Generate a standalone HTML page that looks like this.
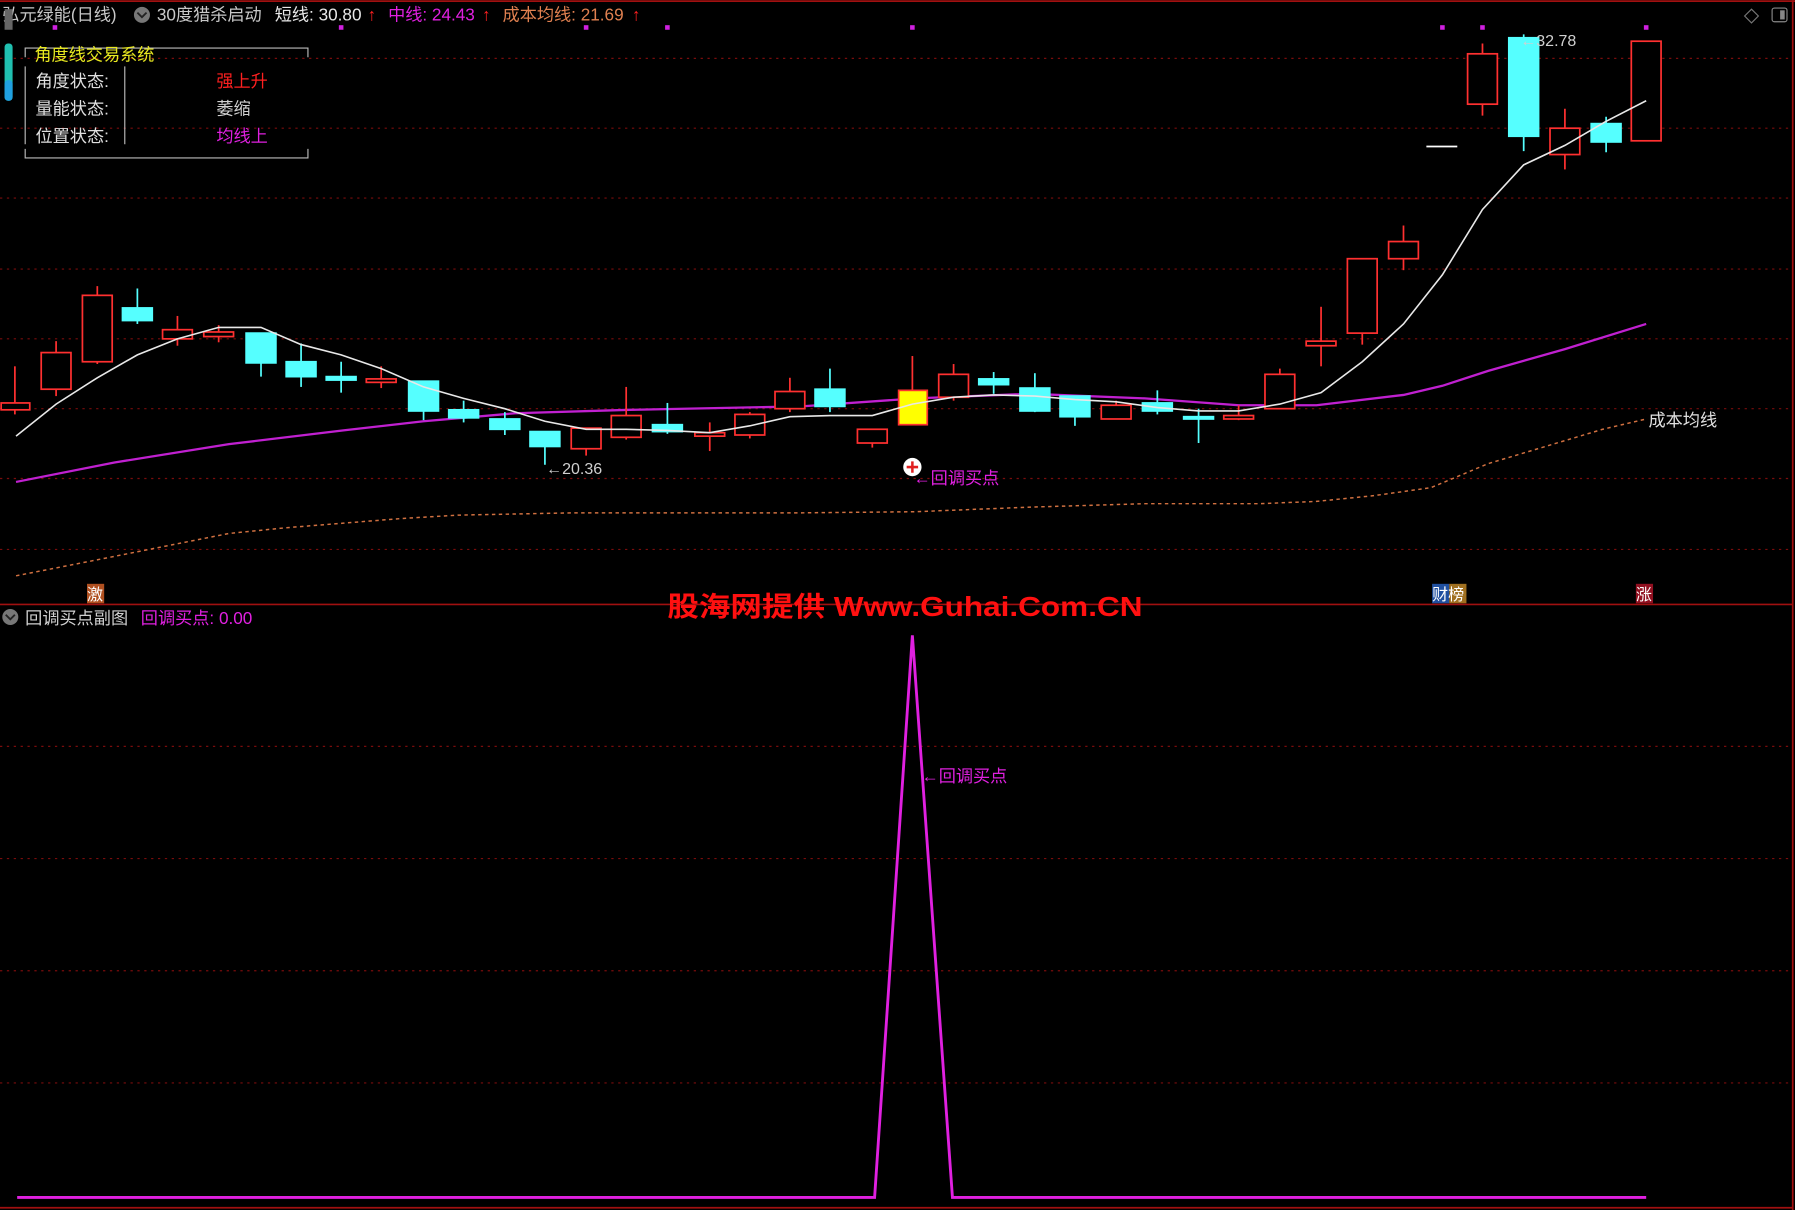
<!DOCTYPE html>
<html><head><meta charset="utf-8"><style>
html,body{margin:0;padding:0;background:#000;overflow:hidden}
svg{display:block}
text{font-family:"Liberation Sans","Noto Sans CJK SC",sans-serif}
</style></head><body>
<svg width="1795" height="1210" viewBox="0 0 1568 1057" preserveAspectRatio="none" xmlns="http://www.w3.org/2000/svg">
<rect width="1568" height="1057" fill="#000"/>
<g stroke="#7a0c0c" stroke-width="1" stroke-dasharray="2,4">
<line x1="0" y1="51" x2="1566" y2="51"/><line x1="0" y1="112" x2="1566" y2="112"/>
<line x1="0" y1="173" x2="1566" y2="173"/><line x1="0" y1="235" x2="1566" y2="235"/>
<line x1="0" y1="296" x2="1566" y2="296"/><line x1="0" y1="357" x2="1566" y2="357"/>
<line x1="0" y1="418" x2="1566" y2="418"/><line x1="0" y1="480" x2="1566" y2="480"/>
<line x1="0" y1="652" x2="1566" y2="652"/><line x1="0" y1="750" x2="1566" y2="750"/>
<line x1="0" y1="848" x2="1566" y2="848"/><line x1="0" y1="946" x2="1566" y2="946"/>
</g>
<g stroke="#a01010" stroke-width="1.5" fill="none">
<line x1="0" y1="1" x2="1568" y2="1"/><line x1="1566" y1="0" x2="1566" y2="1057"/>
<line x1="0" y1="528" x2="1566" y2="528"/><line x1="0" y1="1055" x2="1566" y2="1055"/>
</g>
<text x="2" y="18" font-size="15" fill="#c8c8c8">弘元绿能(日线)</text>
<circle cx="124" cy="13" r="7" fill="#777"/><path d="M120 11 L124 15 L128 11" stroke="#222" stroke-width="1.6" fill="none"/>
<text x="137" y="18" font-size="15" fill="#c8c8c8">30度猎杀启动</text>
<text x="240" y="18" font-size="15" fill="#e8e8e8">短线: 30.80</text>
<text x="321" y="18" font-size="15" fill="#ff2020">↑</text>
<text x="339" y="18" font-size="15" fill="#e020e0">中线: 24.43</text>
<text x="421" y="18" font-size="15" fill="#ff2020">↑</text>
<text x="439" y="18" font-size="15" fill="#e08050">成本均线: 21.69</text>
<text x="552" y="18" font-size="15" fill="#ff2020">↑</text>
<g fill="#d020e0">
<rect x="46" y="22" width="4" height="4"/><rect x="296" y="22" width="4" height="4"/><rect x="510" y="22" width="4" height="4"/>
<rect x="581" y="22" width="4" height="4"/><rect x="795" y="22" width="4" height="4"/><rect x="1258" y="22" width="4" height="4"/>
<rect x="1293" y="22" width="4" height="4"/><rect x="1436" y="22" width="4" height="4"/>
</g>
<path d="M1530 8 L1536 14 L1530 20 L1524 14 Z" stroke="#777" fill="none"/>
<rect x="1548" y="7" width="13" height="12" rx="2" stroke="#888" fill="none"/><rect x="1555" y="9" width="4" height="8" fill="#888"/>
<rect x="4" y="8" width="7" height="18" fill="#666"/>
<rect x="4" y="38" width="7" height="50" rx="3" fill="#20c0b0"/>
<rect x="4" y="70" width="7" height="18" rx="3" fill="#20a0e0"/>
<path d="M22 50 L22 42 L269 42 L269 50 M22 130 L22 138 L269 138 L269 130" stroke="#bbb" fill="none"/>
<line x1="22" y1="58" x2="22" y2="126" stroke="#bbb"/>
<line x1="109" y1="58" x2="109" y2="126" stroke="#bbb"/>
<text x="30" y="53" font-size="15" fill="#e8e820">角度线交易系统</text>
<text x="31" y="76" font-size="15" fill="#e0e0e0">角度状态:</text>
<text x="31" y="100" font-size="15" fill="#e0e0e0">量能状态:</text>
<text x="31" y="124" font-size="15" fill="#e0e0e0">位置状态:</text>
<text x="189" y="76" font-size="15" fill="#ff2020">强上升</text>
<text x="189" y="100" font-size="15" fill="#d0d0d0">萎缩</text>
<text x="189" y="124" font-size="15" fill="#e020e0">均线上</text>
<polyline fill="none" stroke="#d07040" stroke-width="1.3" stroke-dasharray="3,3" points="14,503 80,490 150,476 200,466 250,461 300,457 350,453 400,450 500,448 600,448 700,448 800,447 900,443 1000,440 1100,440 1150,438 1200,433 1250,426 1300,405 1350,390 1400,375 1438,366"/>
<polyline fill="none" stroke="#c020d0" stroke-width="2" points="14,421 100,404 200,388 300,376 370,368 450,361 550,358 700,355 800,348 900,344 1000,348 1082,354 1150,354 1226,345 1260,337 1300,324 1367,305 1438,283"/>
<g stroke-width="1.5">
<g stroke="#ff3030" fill="none">
<line x1="13" y1="320" x2="13" y2="362"/><rect x="1" y="352" width="25" height="6" fill="#000"/>
<line x1="49" y1="298" x2="49" y2="346"/><rect x="36" y="308" width="26" height="32" fill="#000"/>
<line x1="85" y1="250" x2="85" y2="318"/><rect x="72" y="258" width="26" height="58" fill="#000"/>
<line x1="155" y1="276" x2="155" y2="302"/><rect x="142" y="288" width="26" height="8" fill="#000"/>
<line x1="191" y1="284" x2="191" y2="299"/><rect x="178" y="290" width="26" height="4" fill="#000"/>
<line x1="333" y1="320" x2="333" y2="339"/><rect x="320" y="331" width="26" height="3" fill="#000"/>
<line x1="512" y1="374" x2="512" y2="398"/><rect x="499" y="374" width="26" height="18" fill="#000"/>
<line x1="547" y1="338" x2="547" y2="384"/><rect x="534" y="363" width="26" height="19" fill="#000"/>
<line x1="620" y1="369" x2="620" y2="394"/><rect x="607" y="378" width="26" height="3" fill="#000"/>
<line x1="655" y1="360" x2="655" y2="383"/><rect x="642" y="362" width="26" height="18" fill="#000"/>
<line x1="690" y1="330" x2="690" y2="360"/><rect x="677" y="342" width="26" height="15" fill="#000"/>
<line x1="762" y1="375" x2="762" y2="391"/><rect x="749" y="375" width="26" height="12" fill="#000"/>
<line x1="797" y1="311" x2="797" y2="341"/>
<line x1="833" y1="318" x2="833" y2="350"/><rect x="820" y="327" width="26" height="20" fill="#000"/>
<line x1="975" y1="350" x2="975" y2="366"/><rect x="962" y="354" width="26" height="12" fill="#000"/>
<line x1="1082" y1="354" x2="1082" y2="367"/><rect x="1069" y="363" width="26" height="3" fill="#000"/>
<line x1="1118" y1="322" x2="1118" y2="357"/><rect x="1105" y="327" width="26" height="30" fill="#000"/>
<line x1="1154" y1="268" x2="1154" y2="320"/><rect x="1141" y="298" width="26" height="4" fill="#000"/>
<line x1="1190" y1="226" x2="1190" y2="301"/><rect x="1177" y="226" width="26" height="65" fill="#000"/>
<line x1="1226" y1="197" x2="1226" y2="236"/><rect x="1213" y="211" width="26" height="15" fill="#000"/>
<line x1="1295" y1="38" x2="1295" y2="101"/><rect x="1282" y="47" width="26" height="44" fill="#000"/>
<line x1="1367" y1="95" x2="1367" y2="148"/><rect x="1354" y="112" width="26" height="23" fill="#000"/>
<rect x="1425" y="36" width="26" height="87" fill="#000"/>
</g>
<g stroke="#55ffff" fill="#55ffff">
<line x1="120" y1="252" x2="120" y2="283"/><rect x="107" y="269" width="26" height="11"/>
<line x1="228" y1="291" x2="228" y2="329"/><rect x="215" y="291" width="26" height="26"/>
<line x1="263" y1="300" x2="263" y2="338"/><rect x="250" y="316" width="26" height="13"/>
<line x1="298" y1="316" x2="298" y2="343"/><rect x="285" y="329" width="26" height="3"/>
<line x1="370" y1="333" x2="370" y2="367"/><rect x="357" y="333" width="26" height="26"/>
<line x1="405" y1="350" x2="405" y2="369"/><rect x="392" y="358" width="26" height="7"/>
<line x1="441" y1="360" x2="441" y2="380"/><rect x="428" y="366" width="26" height="9"/>
<line x1="476" y1="377" x2="476" y2="406"/><rect x="463" y="377" width="26" height="13"/>
<line x1="583" y1="352" x2="583" y2="379"/><rect x="570" y="371" width="26" height="6"/>
<line x1="725" y1="322" x2="725" y2="360"/><rect x="712" y="340" width="26" height="15"/>
<line x1="868" y1="325" x2="868" y2="344"/><rect x="855" y="331" width="26" height="5"/>
<line x1="904" y1="326" x2="904" y2="360"/><rect x="891" y="339" width="26" height="20"/>
<line x1="939" y1="346" x2="939" y2="372"/><rect x="926" y="346" width="26" height="18"/>
<line x1="1011" y1="341" x2="1011" y2="362"/><rect x="998" y="352" width="26" height="7"/>
<line x1="1047" y1="357" x2="1047" y2="387"/><rect x="1034" y="364" width="26" height="2"/>
<line x1="1331" y1="30" x2="1331" y2="132"/><rect x="1318" y="33" width="26" height="86"/>
<line x1="1403" y1="102" x2="1403" y2="133"/><rect x="1390" y="108" width="26" height="16"/>
</g>
<rect x="785" y="341" width="25" height="30" fill="#ffff00" stroke="#ff3030"/>
<line x1="1246" y1="128" x2="1273" y2="128" stroke="#fff" stroke-width="1.5"/>
</g>
<polyline fill="none" stroke="#e8e8e8" stroke-width="1.4" points="14,381 49,353 85,330 120,310 155,296 191,286 228,286 263,301 298,310 333,322 370,338 405,348 441,357 476,368 512,375 547,375 583,376 620,378 655,372 690,364 725,363 762,363 797,353 833,347 868,345 904,346 939,349 975,351 1011,356 1047,359 1082,359 1118,353 1154,343 1190,316 1226,283 1260,240 1295,183 1331,144 1367,127 1403,106 1438,88"/>
<text x="477" y="414" font-size="14" fill="#d0d0d0">←20.36</text>
<text x="1328" y="40" font-size="14" fill="#d0d0d0">←32.78</text>
<text x="1440" y="372" font-size="15" fill="#e0e0e0">成本均线</text>
<circle cx="797" cy="408" r="8" fill="#fff"/>
<path d="M797 403 V413 M792 408 H802" stroke="#e02020" stroke-width="2.2"/>
<text x="798" y="423" font-size="15" fill="#e020e0">←回调买点</text>
<rect x="76" y="510" width="15" height="17" fill="#b05020"/>
<text x="76" y="524" font-size="14" fill="#fff">激</text>
<rect x="1251" y="510" width="15" height="17" fill="#2050a0"/><rect x="1266" y="510" width="15" height="17" fill="#a07020"/>
<text x="1251" y="524" font-size="14" fill="#fff">财榜</text>
<rect x="1429" y="510" width="15" height="17" fill="#901020"/>
<text x="1429" y="524" font-size="14" fill="#fff">涨</text>
<circle cx="9" cy="539" r="7" fill="#777"/><path d="M5 537 L9 541 L13 537" stroke="#222" stroke-width="1.6" fill="none"/>
<text x="22" y="545" font-size="15" fill="#d0d0d0">回调买点副图</text>
<text x="123" y="545" font-size="15" fill="#e020e0">回调买点: 0.00</text>
<text x="583" y="538" font-size="24" font-weight="bold" fill="#ff1010" textLength="415" lengthAdjust="spacingAndGlyphs">股海网提供 Www.Guhai.Com.CN</text>
<polyline fill="none" stroke="#e020e0" stroke-width="2.5" points="15,1046 764,1046 797,555 832,1046 1438,1046"/>
<text x="805" y="683" font-size="15" fill="#e020e0">←回调买点</text>
</svg>
</body></html>
